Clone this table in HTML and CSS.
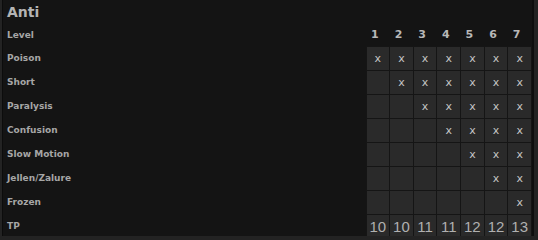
FILE: index.html
```html
<!doctype html>
<html lang="en">
  <head>
    <meta charset="UTF-8" />
    <title>Anti</title>
    <link rel="stylesheet" href="styles.css">
  </head>
  <body>
    <div class="panel">
      <h2>Anti</h2>
      <table class="anti">
        <tr class="head">
          <th>Level</th>
          <td>1</td><td>2</td><td>3</td><td>4</td><td>5</td><td>6</td><td>7</td>
        </tr>
        <tr>
          <th>Poison</th>
          <td>x</td><td>x</td><td>x</td><td>x</td><td>x</td><td>x</td><td>x</td>
        </tr>
        <tr>
          <th>Short</th>
          <td></td><td>x</td><td>x</td><td>x</td><td>x</td><td>x</td><td>x</td>
        </tr>
        <tr>
          <th>Paralysis</th>
          <td></td><td></td><td>x</td><td>x</td><td>x</td><td>x</td><td>x</td>
        </tr>
        <tr>
          <th>Confusion</th>
          <td></td><td></td><td></td><td>x</td><td>x</td><td>x</td><td>x</td>
        </tr>
        <tr>
          <th>Slow Motion</th>
          <td></td><td></td><td></td><td></td><td>x</td><td>x</td><td>x</td>
        </tr>
        <tr>
          <th>Jellen/Zalure</th>
          <td></td><td></td><td></td><td></td><td></td><td>x</td><td>x</td>
        </tr>
        <tr>
          <th>Frozen</th>
          <td></td><td></td><td></td><td></td><td></td><td></td><td>x</td>
        </tr>
        <tr class="tp">
          <th>TP</th>
          <td>10</td><td>10</td><td>11</td><td>11</td><td>12</td><td>12</td><td>13</td>
        </tr>
      </table>
    </div>
  </body>
</html>
```

FILE: styles.css
```css
body {
  margin: 0;
  background-color: #232323;
  font-family: "DejaVu Sans", Verdana, sans-serif;
}

.panel {
  width: 529px;
  height: 236px;
  margin-left: 2px;
  border-left: 1px solid #0c0c0c;
  border-right: 2px solid #0e0e0e;
  background-color: #141414;
  overflow: hidden;
}

h2 {
  margin: 0;
  height: 24px;
  padding-left: 4px;
  font-size: 14px;
  line-height: 24px;
  color: #b4b4b4;
}

.anti {
  width: 529px;
  border-collapse: collapse;
  table-layout: fixed;
}

.anti th {
  width: 358px;
  padding-left: 4px;
  text-align: left;
  font-size: 9px;
  font-weight: bold;
  color: #a6a6a6;
}

.anti tr {
  height: 24px;
}

.anti tr.head {
  height: 22px;
}

.anti td {
  padding: 0;
  text-align: center;
  font-size: 11px;
  color: #c4c4c4;
  border: 1px solid #151515;
  background: repeating-conic-gradient(#2d2d2d 0 25%, #272727 0 50%) 0 0 / 2px 2px;
}

.anti tr.head td {
  border: none;
  background: none;
  text-align: left;
  padding-left: 5px;
  font-weight: bold;
  color: #b8b8b8;
}

.anti tr.tp td {
  font-family: "Liberation Sans", Arial, sans-serif;
  font-size: 15px;
  color: #b0b0b0;
}
```
